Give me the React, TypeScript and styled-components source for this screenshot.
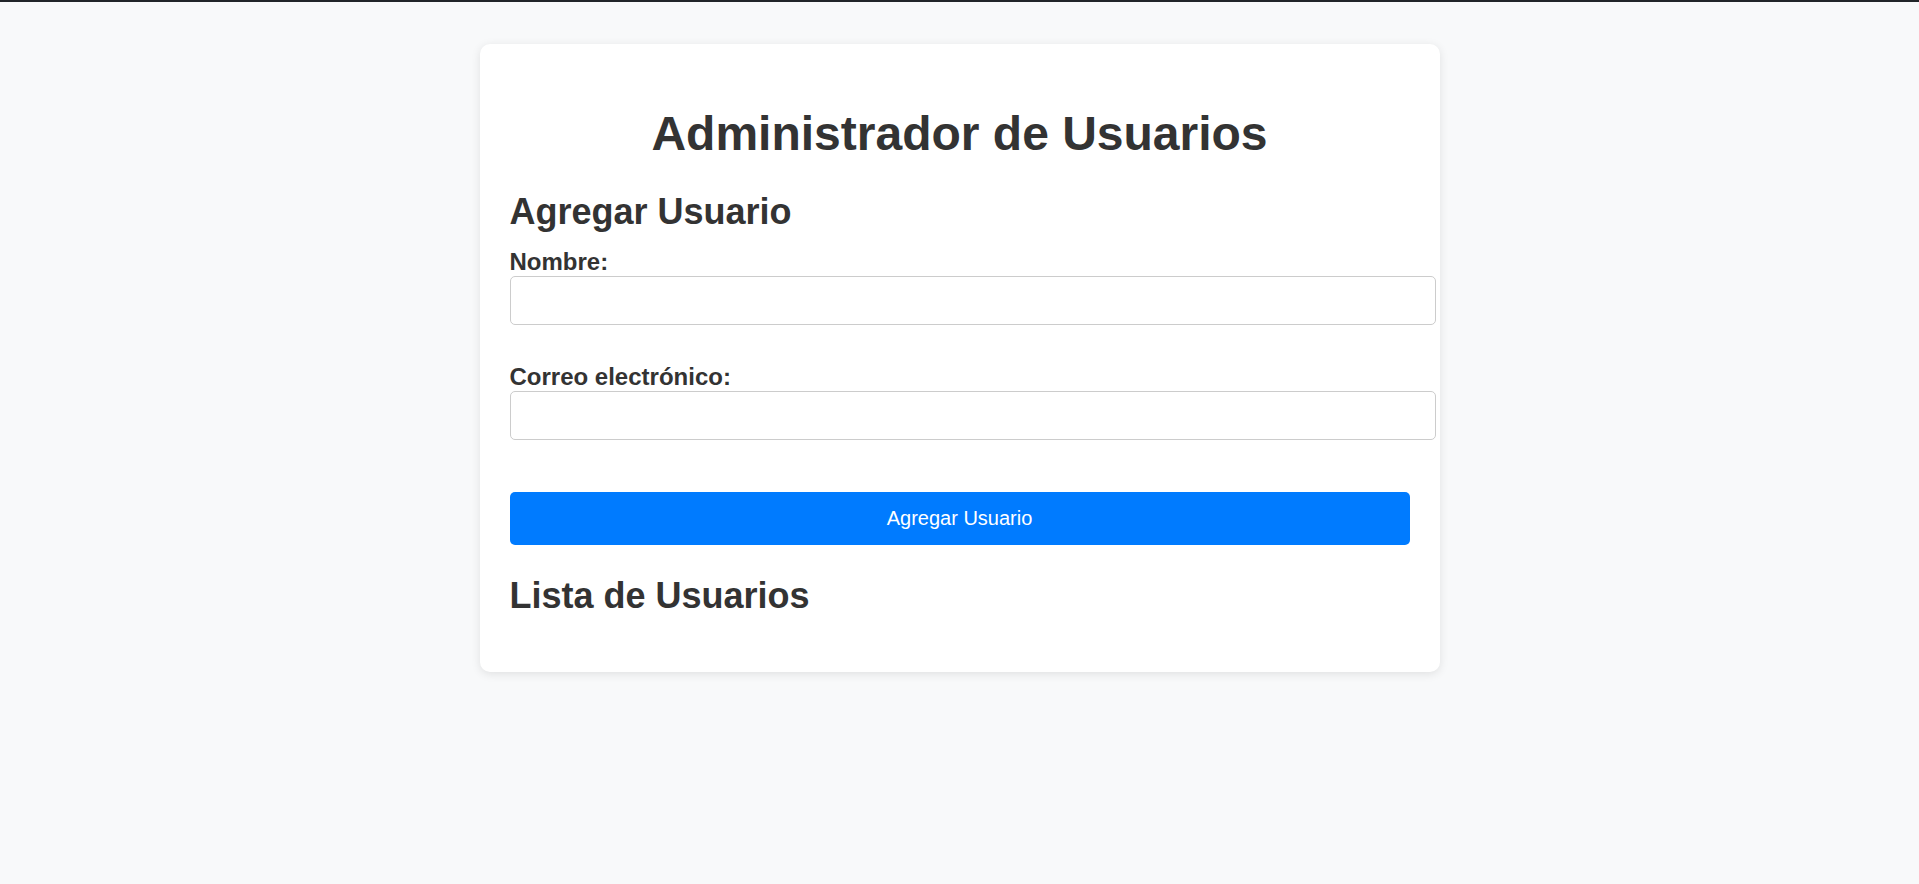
import React from "react";
import styled, { createGlobalStyle } from "styled-components";

const GlobalStyle = createGlobalStyle`
  html, body {
    margin: 0;
    padding: 0;
    background: #f8f9fa;
    font-family: "Liberation Sans", Arial, sans-serif;
    color: #333;
  }
`;

const Page = styled.div`
  min-height: 884px;
  border-top: 2px solid #212529;
  box-sizing: border-box;
  padding-top: 42px;
`;

const Card = styled.main`
  width: 900px;
  margin: 0 auto;
  padding: 30px 30px 30px;
  background: #ffffff;
  border-radius: 10px;
  box-shadow: 0 2px 10px rgba(0, 0, 0, 0.1);
`;

const Title = styled.h1`
  margin: 32px 0 30px;
  font-size: 48px;
  font-weight: 700;
  text-align: center;
  color: #333;
`;

const SectionTitle = styled.h2<{ $after?: number }>`
  margin: 0 0 ${(p) => p.$after ?? 15}px;
  font-size: 36px;
  font-weight: 700;
  color: #333;
`;

const Form = styled.form`
  display: block;
`;

const Label = styled.label`
  display: block;
  font-size: 24px;
  font-weight: 700;
  color: #333;
`;

const Input = styled.input<{ $after: number }>`
  display: block;
  width: 100%;
  margin: 0 0 ${(p) => p.$after}px;
  padding: 12px;
  font-family: "Liberation Sans", Arial, sans-serif;
  font-size: 20px;
  border: 1px solid #ccc;
  border-radius: 5px;
  background: #fff;
  color: #333;
  outline: none;
`;

const Button = styled.button`
  display: block;
  width: 100%;
  margin: 0 0 30px;
  padding: 15px;
  font-family: "Liberation Sans", Arial, sans-serif;
  font-size: 20px;
  color: #fff;
  background: #007bff;
  border: none;
  border-radius: 5px;
  cursor: pointer;
`;

const UserList = styled.ul`
  margin: 0;
  padding: 0;
  list-style: none;
`;

export default function App() {
  return (
    <>
      <GlobalStyle />
      <Page>
        <Card>
          <Title>Administrador de Usuarios</Title>
          <SectionTitle>Agregar Usuario</SectionTitle>
          <Form onSubmit={(e) => e.preventDefault()}>
            <Label htmlFor="nombre">Nombre:</Label>
            <Input id="nombre" type="text" $after={38} />
            <Label htmlFor="correo">Correo electrónico:</Label>
            <Input id="correo" type="email" $after={52} />
            <Button type="submit">Agregar Usuario</Button>
          </Form>
          <SectionTitle $after={25}>Lista de Usuarios</SectionTitle>
          <UserList />
        </Card>
      </Page>
    </>
  );
}
